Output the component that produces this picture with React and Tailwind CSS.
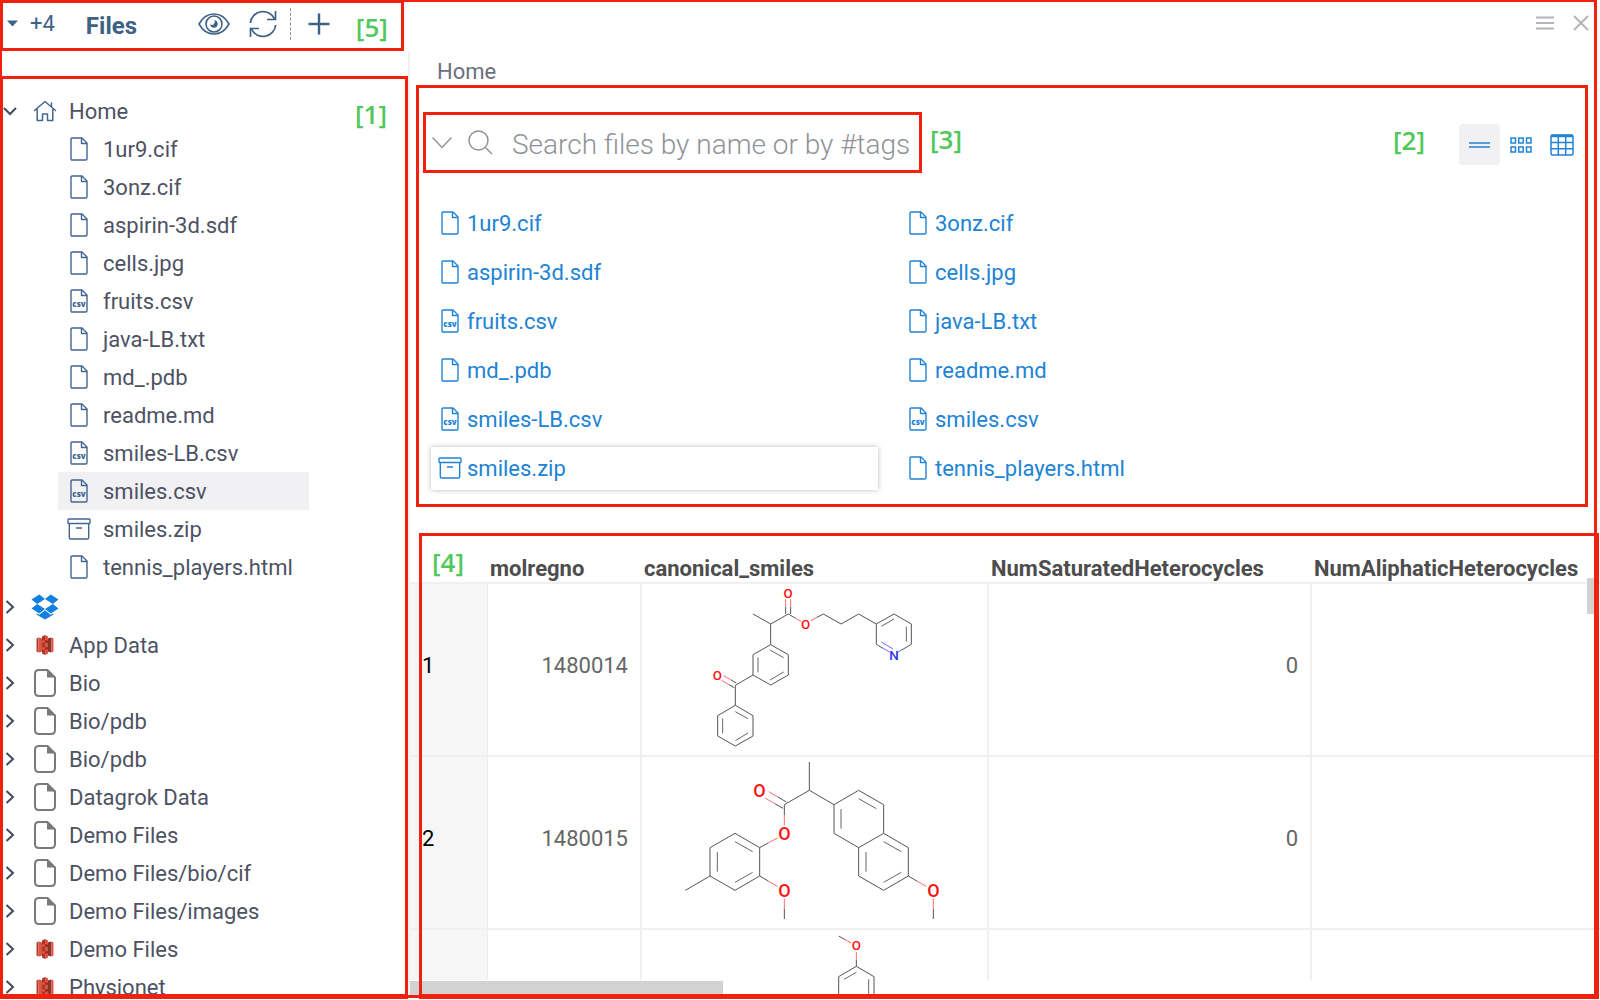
import React from "react";

const treeFiles = [
  ["1ur9.cif", "file"],
  ["3onz.cif", "file"],
  ["aspirin-3d.sdf", "file"],
  ["cells.jpg", "file"],
  ["fruits.csv", "csv"],
  ["java-LB.txt", "file"],
  ["md_.pdb", "file"],
  ["readme.md", "file"],
  ["smiles-LB.csv", "csv"],
  ["smiles.csv", "csv"],
  ["smiles.zip", "zip"],
  ["tennis_players.html", "file"],
];

const shares = [
  ["", "dropbox"],
  ["App Data", "s3"],
  ["Bio", "share"],
  ["Bio/pdb", "share"],
  ["Bio/pdb", "share"],
  ["Datagrok Data", "share"],
  ["Demo Files", "share"],
  ["Demo Files/bio/cif", "share"],
  ["Demo Files/images", "share"],
  ["Demo Files", "s3"],
  ["Physionet", "s3"],
];

function FileIcon({ csv }) {
  return (
    <svg width="18" height="24" viewBox="0 0 18 24" fill="none" stroke="currentColor" strokeWidth="1.4" strokeLinejoin="round" aria-hidden="true">
      <path d="M1 2.2Q1 1 2.2 1H12L17 6V21.8Q17 23 15.800 23H2.200Q1 23 1 21.800Z" />
      <path d="M11.500 1V6.500H17" />
      {csv && (
        <text x="9" y="18" textAnchor="middle" fontSize="8" fontWeight="800" fontFamily="Open Sans, sans-serif" fill="currentColor" stroke="none">
          csv
        </text>
      )}
    </svg>
  );
}

function ZipIcon() {
  return (
    <svg width="24" height="22" viewBox="0 0 24 22" fill="none" stroke="currentColor" strokeWidth="1.4" strokeLinejoin="round" aria-hidden="true">
      <rect x="1" y="1" width="22" height="4.500" rx="0.800" />
      <path d="M2.300 5.500V19.500Q2.300 21 3.600 21H20.400Q21.700 21 21.700 19.500V5.500M9 10H15" />
    </svg>
  );
}

function KindIcon({ kind }) {
  if (kind === "zip") return <ZipIcon />;
  return <FileIcon csv={kind === "csv"} />;
}

function ShareIcon() {
  return (
    <svg width="22" height="28" viewBox="0 0 22 28" fill="none" stroke="#7a7a7a" strokeWidth="2" aria-hidden="true">
      <path d="M13.500 1H5Q1 1 1 5V23Q1 27 5 27H17Q21 27 21 23V8.500Z" />
      <path d="M13 1L21 8.500H13Z" fill="#7a7a7a" stroke="none" />
    </svg>
  );
}

function DropboxIcon() {
  return (
    <svg width="28" height="26" viewBox="0 0 28 26" fill="#1081de" aria-hidden="true">
      <path d="M8.300 0.500L14 5L6.200 10L0.500 5.500ZM19.700 0.500L27.500 5.500L21.800 10L14 5ZM6.200 10L14 15L8.300 19.500L0.500 14.500ZM21.800 10L27.500 14.500L19.700 19.500L14 15Z" />
      <path d="M14 16.300L19.700 20.800L22.300 19.300V20.800L14 25.500L5.700 20.800V19.300L8.300 20.800Z" />
    </svg>
  );
}

function S3Icon() {
  return (
    <svg width="18" height="20" viewBox="0 0 18 20" aria-hidden="true">
      <path d="M0.500 3.500L2.500 2.500V17.500L0.500 16.500Z" fill="#b03a2c" />
      <path d="M2.500 2.500L9 4V16L2.500 17.500Z" fill="#e05243" />
      <path d="M15.500 2.500L9 4V16L15.500 17.500Z" fill="#8c3123" />
      <path d="M15.500 2.500L17.500 3.500V16.500L15.500 17.500Z" fill="#e05243" />
      <path d="M6 1.500L9 0V5L6 5.800ZM6 18.500L9 20V15L6 14.200ZM6 8L9 7.500V12.500L6 12Z" fill="#a33a2b" />
      <path d="M12 1.500L9 0V5L12 5.800ZM12 18.500L9 20V15L12 14.200ZM12 8L9 7.500V12.500L12 12Z" fill="#e05243" />
    </svg>
  );
}

function HomeIcon() {
  return (
    <svg width="24" height="22" viewBox="0 0 24 22" fill="none" stroke="#42668f" strokeWidth="1.500" strokeLinejoin="round" strokeLinecap="round" aria-hidden="true">
      <path d="M1.500 10.500L12 1.500L22.500 10.500M18.500 7V3M4.200 9V20.500H9.500V14H14.500V20.500H19.800V9" />
    </svg>
  );
}

function Chevron({ open }) {
  return (
    <svg width="16" height="16" viewBox="0 0 16 16" fill="none" stroke="#434b5e" strokeWidth="2" aria-hidden="true">
      <path d={open ? "M2 5L8 11L14 5" : "M3.500 2L10 8L3.500 14"} />
    </svg>
  );
}

function Tag({ children }) {
  return (
    <span className="font-['Open_Sans',sans-serif] text-[26px] leading-8 font-semibold text-[#50c85a]">{children}</span>
  );
}

function Bonds({ d, inner, hetero }) {
  return (
    <g>
      <path d={d} stroke="#555" />
      {inner && <path d={inner} stroke="#666" />}
      {hetero && <path d={hetero} stroke="#ff6b6b" />}
    </g>
  );
}

function Atom({ x, y, size, blue, children }) {
  return (
    <text x={x} y={y} dy="0.36em" textAnchor="middle" fontSize={size} fontWeight="500" fontFamily="Roboto, sans-serif" fill={blue ? "#3030ff" : "#ff1010"} stroke="none">
      {children}
    </text>
  );
}

function MoleculeOne() {
  return (
    <svg width="346" height="171" viewBox="-51 72 1038 513" fill="none" strokeWidth="3" className="block">
      <Bonds
        d="M282 162L335 192L388 162M335 192V254L388 284V345L335 375L282 345V284L335 254M282 345L229 376V436L282 467V528L229 558L176 528V467L229 436M380 162V140M395 162V140M388 162L410 175M474 172L493 162L546 192L599 162L652 192L705 162L757 192V253L728 270M652 192V253L672 265M232 369L215 359M226 383L210 374"
        inner="M333 270L374 293M297 292V337M333 360L374 336M229 455L267 476M191 475V520M229 542L267 519M667 199L705 177M742 200V245"
        hetero="M380 140V118M395 140V118M410 175L427 185M456 182L474 172M215 359L194 347M210 374L187 361"
      />
      <path d="M728 270L717 276M672 265L692 276M667 246L702 267" stroke="#6a6aff" />
      <Atom x={387} y={101} size={40}>O</Atom>
      <Atom x={440} y={193} size={40}>O</Atom>
      <Atom x={175} y={346} size={40}>O</Atom>
      <Atom x={705} y={285} size={40} blue>N</Atom>
    </svg>
  );
}

function MoleculeTwo() {
  return (
    <svg width="346" height="171" viewBox="-51 21 1038 513" fill="none" strokeWidth="3" className="block">
      <Bonds
        d="M451 36V121L376 164V195M451 121L525 164V250L599 293V378L674 421L748 378V293L674 250V164L599 121L525 164M674 250L599 293M748 378L775 394M823 476V507M382 156L357 141M372 175L346 160M329 278L302 293V378L228 421L153 378V293L228 250L302 293M302 378L329 394M376 476V507M153 378L79 421"
        inner="M599 146L652 176M546 177V236M674 275L727 305M621 306V365M674 397L727 367M228 275L281 305M175 306V365M228 397L281 367"
        hetero="M357 141L329 125M346 160L318 144M376 195V226M355 264L329 278M329 394L355 409M376 446V476M775 394L802 409M823 446V476"
      />
      <Atom x={301} y={121} size={54}>O</Atom>
      <Atom x={376} y={250} size={54}>O</Atom>
      <Atom x={376} y={422} size={54}>O</Atom>
      <Atom x={823} y={422} size={54}>O</Atom>
    </svg>
  );
}

function MoleculeThree() {
  return (
    <svg width="346" height="64" viewBox="-51 540 1038 192" fill="none" strokeWidth="3" className="block">
      <Bonds
        d="M539 558L558 569M592 628V649L645 680V740M592 649L539 680V740"
        inner="M555 688L592 667M629 688V740"
        hetero="M558 569L577 579M592 606V628"
      />
      <Atom x={592} y={587} size={40}>O</Atom>
    </svg>
  );
}

const rows = [
  { id: 1, reg: "1480014", mol: MoleculeOne, sat: "0", h: "h-[173px]" },
  { id: 2, reg: "1480015", mol: MoleculeTwo, sat: "0", h: "h-[173px]" },
  { id: 3, reg: "", mol: MoleculeThree, sat: "", h: "h-[51px]" },
];

function Toolbar() {
  return (
    <header className="mr-1 flex h-[51px] shrink-0 items-center border-3 border-[#f2210f] pb-1 pl-1 text-[#3e6186]">
      <button className="flex items-center gap-3 text-[22px]">
        <svg width="11" height="7" viewBox="0 0 11 7" fill="currentColor" aria-hidden="true">
          <path d="M0 0.500H11L5.500 6.500Z" />
        </svg>
        +4
      </button>
      <h1 className="ml-[31px] w-[112px] pt-1 text-[24px] leading-7 font-bold">Files</h1>
      <button aria-label="Preview">
        <svg width="32" height="24" viewBox="0 0 32 24" fill="none" stroke="currentColor" strokeWidth="1.600" aria-hidden="true">
          <path d="M1 12Q6.500 2 16 2T31 12Q25.500 22 16 22T1 12Z" />
          <circle cx="16" cy="12" r="8" />
          <path d="M16 8.300a3.700 3.700 0 1 1 -3.700 3.700a2 2 0 0 0 3.700 -3.700Z" fill="currentColor" stroke="none" />
        </svg>
      </button>
      <button aria-label="Refresh" className="ml-[19px]">
        <svg width="28" height="28" viewBox="0 0 28 28" fill="none" stroke="currentColor" strokeWidth="1.700" aria-hidden="true">
          <path d="M1.300 13A12.700 12.700 0 0 1 25.500 9M26.500 1V9.500H18M26.700 15A12.700 12.700 0 0 1 2.500 19M1.500 27V18.500H10" />
        </svg>
      </button>
      <span className="ml-[13px] h-8 border-l border-dashed border-[#8b8f99]" />
      <button aria-label="Add" className="ml-[17px]">
        <svg width="22" height="22" viewBox="0 0 22 22" fill="none" stroke="currentColor" strokeWidth="2.400" aria-hidden="true">
          <path d="M11 0.500V21.500M0.500 11H21.500" />
        </svg>
      </button>
      <span className="ml-[26px] pt-2">
        <Tag>[5]</Tag>
      </span>
    </header>
  );
}

function Tree() {
  return (
    <nav className="relative mt-[25px] mb-px flex-1 overflow-hidden border-3 border-b-5 border-[#f2210f] pt-[13px] text-[22px] text-[#4d5263]">
      <button className="flex h-[38px] items-center">
        <span className="-ml-px w-[31px]"><Chevron open /></span>
        <span className="w-[36px]"><HomeIcon /></span>
        Home
      </button>
      <ul className="mb-0.5 ml-[55px] w-fit">
        {treeFiles.map(([name, kind]) => (
          <li key={name}>
            <button className={"flex h-[38px] w-full items-center pr-4 pl-2 " + (name === "smiles.csv" ? "bg-[#f1f1f4]" : "")}>
              <span className="mr-[7px] flex w-[30px] justify-start pl-px text-[#42668f]">
                <span className="flex w-6 justify-center"><KindIcon kind={kind} /></span>
              </span>
              {name}
            </button>
          </li>
        ))}
      </ul>
      <ul>
        {shares.map(([name, kind], i) => (
          <li key={i}>
            <button aria-label={name || "Dropbox"} className="flex h-[38px] items-center">
              <span className="w-[27px]"><Chevron /></span>
              <span className="mr-[9px] flex w-[30px] justify-center">
                {kind === "dropbox" && <DropboxIcon />}
                {kind === "s3" && <S3Icon />}
                {kind === "share" && <ShareIcon />}
              </span>
              {name}
            </button>
          </li>
        ))}
      </ul>
      <div className="absolute top-[19px] right-[18px]">
        <Tag>[1]</Tag>
      </div>
    </nav>
  );
}

function FilesPanel() {
  return (
    <section className="mr-3 ml-1.5 shrink-0 border-3 border-[#f2210f] pt-6 pr-0.5 pb-3.5 pl-1">
      <div className="flex items-center">
        <div className="flex h-[61px] w-[499px] items-center border-3 border-[#f2210f] pl-1.5 text-[#8f9399]">
          <button aria-label="Search history">
            <svg width="20" height="13" viewBox="0 0 20 13" fill="none" stroke="currentColor" strokeWidth="1.500" aria-hidden="true">
              <path d="M0.500 1.500L10 11.500L19.500 1.500" />
            </svg>
          </button>
          <svg width="25" height="25" viewBox="0 0 25 25" fill="none" stroke="currentColor" strokeWidth="1.500" className="ml-4 shrink-0" aria-hidden="true">
            <circle cx="10.500" cy="10.500" r="9.500" />
            <path d="M17.500 17.500L24 24" />
          </svg>
          <input
            type="text"
            aria-label="Search files"
            placeholder="Search files by name or by #tags"
            className="ml-[19px] min-w-0 flex-1 pt-1 text-[28px] font-light outline-none placeholder:text-[#8f9399]"
          />
        </div>
        <div className="ml-2 flex-1 pb-1.5"><Tag>[3]</Tag></div>
        <div className="mr-[34px] pb-1"><Tag>[2]</Tag></div>
        <div className="flex items-center pt-1 text-[#2083d5]">
          <button aria-label="List view" className="flex size-[41px] items-center justify-center rounded bg-[#f1f1f4]">
            <svg width="21" height="6" viewBox="0 0 21 6" stroke="currentColor" strokeWidth="1.500" aria-hidden="true">
              <path d="M0 1H21M0 5H21" />
            </svg>
          </button>
          <button aria-label="Card view" className="flex size-[41px] items-center justify-center">
            <svg width="22" height="16" viewBox="0 0 22 16" fill="none" stroke="currentColor" strokeWidth="1.500" aria-hidden="true">
              <path d="M1 1H5.500V6H1ZM8.700 1H13.200V6H8.700ZM16.500 1H21V6H16.500ZM1 10H5.500V15H1ZM8.700 10H13.200V15H8.700ZM16.500 10H21V15H16.500Z" />
            </svg>
          </button>
          <button aria-label="Table view" className="flex size-[42px] items-center justify-center">
            <svg width="24" height="22" viewBox="0 0 24 22" fill="none" stroke="currentColor" strokeWidth="1.500" aria-hidden="true">
              <rect x="1" y="1" width="22" height="20" rx="1.500" />
              <path d="M1 2H23" strokeWidth="2.500" />
              <path d="M1 8.500H23M1 14.700H23M8.300 3V21M15.700 3V21" />
            </svg>
          </button>
        </div>
      </div>
      <ul className="mt-[29px] ml-2 grid grid-cols-[repeat(auto-fill,447px)] gap-x-[21px] gap-y-1.5">
        {treeFiles.map(([name, kind]) => (
          <li key={name}>
            <a
              href="#"
              className={"flex h-[43px] items-center pl-[7px] text-[22px] text-[#2083d5] " + (name === "smiles.zip" ? "shadow-[0_0_5px_rgba(70,80,110,0.4)]" : "")}
            >
              <span className="mr-[5px] flex w-6 justify-center pb-0.5"><KindIcon kind={kind} /></span>
              {name}
            </a>
          </li>
        ))}
      </ul>
    </section>
  );
}

function TablePanel() {
  return (
    <section className="relative min-h-0 flex-1 overflow-hidden pt-[26px]">
      <table className="w-full table-fixed border-collapse text-[22px]">
        <colgroup>
          <col className="w-[77px]" />
          <col className="w-[154px]" />
          <col className="w-[347px]" />
          <col className="w-[323px]" />
          <col />
        </colgroup>
        <thead>
          <tr className="h-[50px] border-b-2 border-[#f0f0f0] text-left align-bottom text-[#4d4d4d]">
            <th className="pb-0.5 pl-[22px] leading-[30px] font-normal"><Tag>[4]</Tag></th>
            <th className="pl-[3px] leading-[26px]">molregno</th>
            <th className="pl-[3px] leading-[26px]">canonical_smiles</th>
            <th className="pl-[3px] leading-[26px]">NumSaturatedHeterocycles</th>
            <th className="pl-[3px] leading-[26px]">NumAliphaticHeterocycles</th>
          </tr>
        </thead>
        <tbody className="text-[#666]">
          {rows.map(({ id, reg, mol: Mol, sat, h }) => (
            <tr key={id} className={h + " border-b-2 border-[#f0f0f0] last:border-b-0"}>
              <td className="border-r border-[#ededed] bg-[#f6f6f6] p-0 pb-2 pl-3 text-black">{id < 3 ? id : ""}</td>
              <td className="border-r-2 border-[#f0f0f0] p-0 pr-3 pb-2 text-right">{reg}</td>
              <td className="border-r-2 border-[#f0f0f0] p-0 align-top">
                <div className="h-0"><Mol /></div>
              </td>
              <td className="border-r-2 border-[#f0f0f0] p-0 pr-3 pb-2 text-right">{sat}</td>
              <td className="p-0" />
            </tr>
          ))}
        </tbody>
      </table>
      <div className="absolute top-[71px] right-px h-9 w-3 bg-[#d2d2d2]" />
      <div className="absolute bottom-1 left-0 h-[15px] w-[313px] bg-[#d2d2d2]" />
      <div className="pointer-events-none absolute top-[26px] right-px bottom-px left-[9px] border-3 border-b-5 border-[#f2210f]" />
    </section>
  );
}

export default function App() {
  return (
    <div className="relative flex h-screen overflow-hidden bg-white font-[Roboto,sans-serif]">
      <aside className="flex w-[408px] shrink-0 flex-col">
        <Toolbar />
        <Tree />
      </aside>
      <main className="flex min-w-0 flex-1 flex-col">
        <div className="flex h-[51px] shrink-0 items-center justify-end gap-[19px] pr-[11px] pb-1.5 text-[#b4b4b9]">
          <button aria-label="Menu">
            <svg width="18" height="14" viewBox="0 0 18 14" stroke="currentColor" strokeWidth="2" aria-hidden="true">
              <path d="M0 1.500H18M0 7H18M0 12.500H18" />
            </svg>
          </button>
          <button aria-label="Close">
            <svg width="16" height="16" viewBox="0 0 16 16" stroke="currentColor" strokeWidth="2" aria-hidden="true">
              <path d="M1 1L15 15M15 1L1 15" />
            </svg>
          </button>
        </div>
        <div className="flex min-h-0 flex-1 flex-col border-l-2 border-[#f0f0f0]">
          <a href="#" className="h-[34px] shrink-0 self-start pt-[7px] pl-[27px] text-[22px] leading-7 text-[#6b6f7d]">Home</a>
          <FilesPanel />
          <TablePanel />
        </div>
      </main>
      <div className="pointer-events-none absolute top-0 right-[3px] bottom-[2px] left-0 border-t-2 border-r-3 border-b-3 border-l-2 border-[#f2210f]" />
    </div>
  );
}
